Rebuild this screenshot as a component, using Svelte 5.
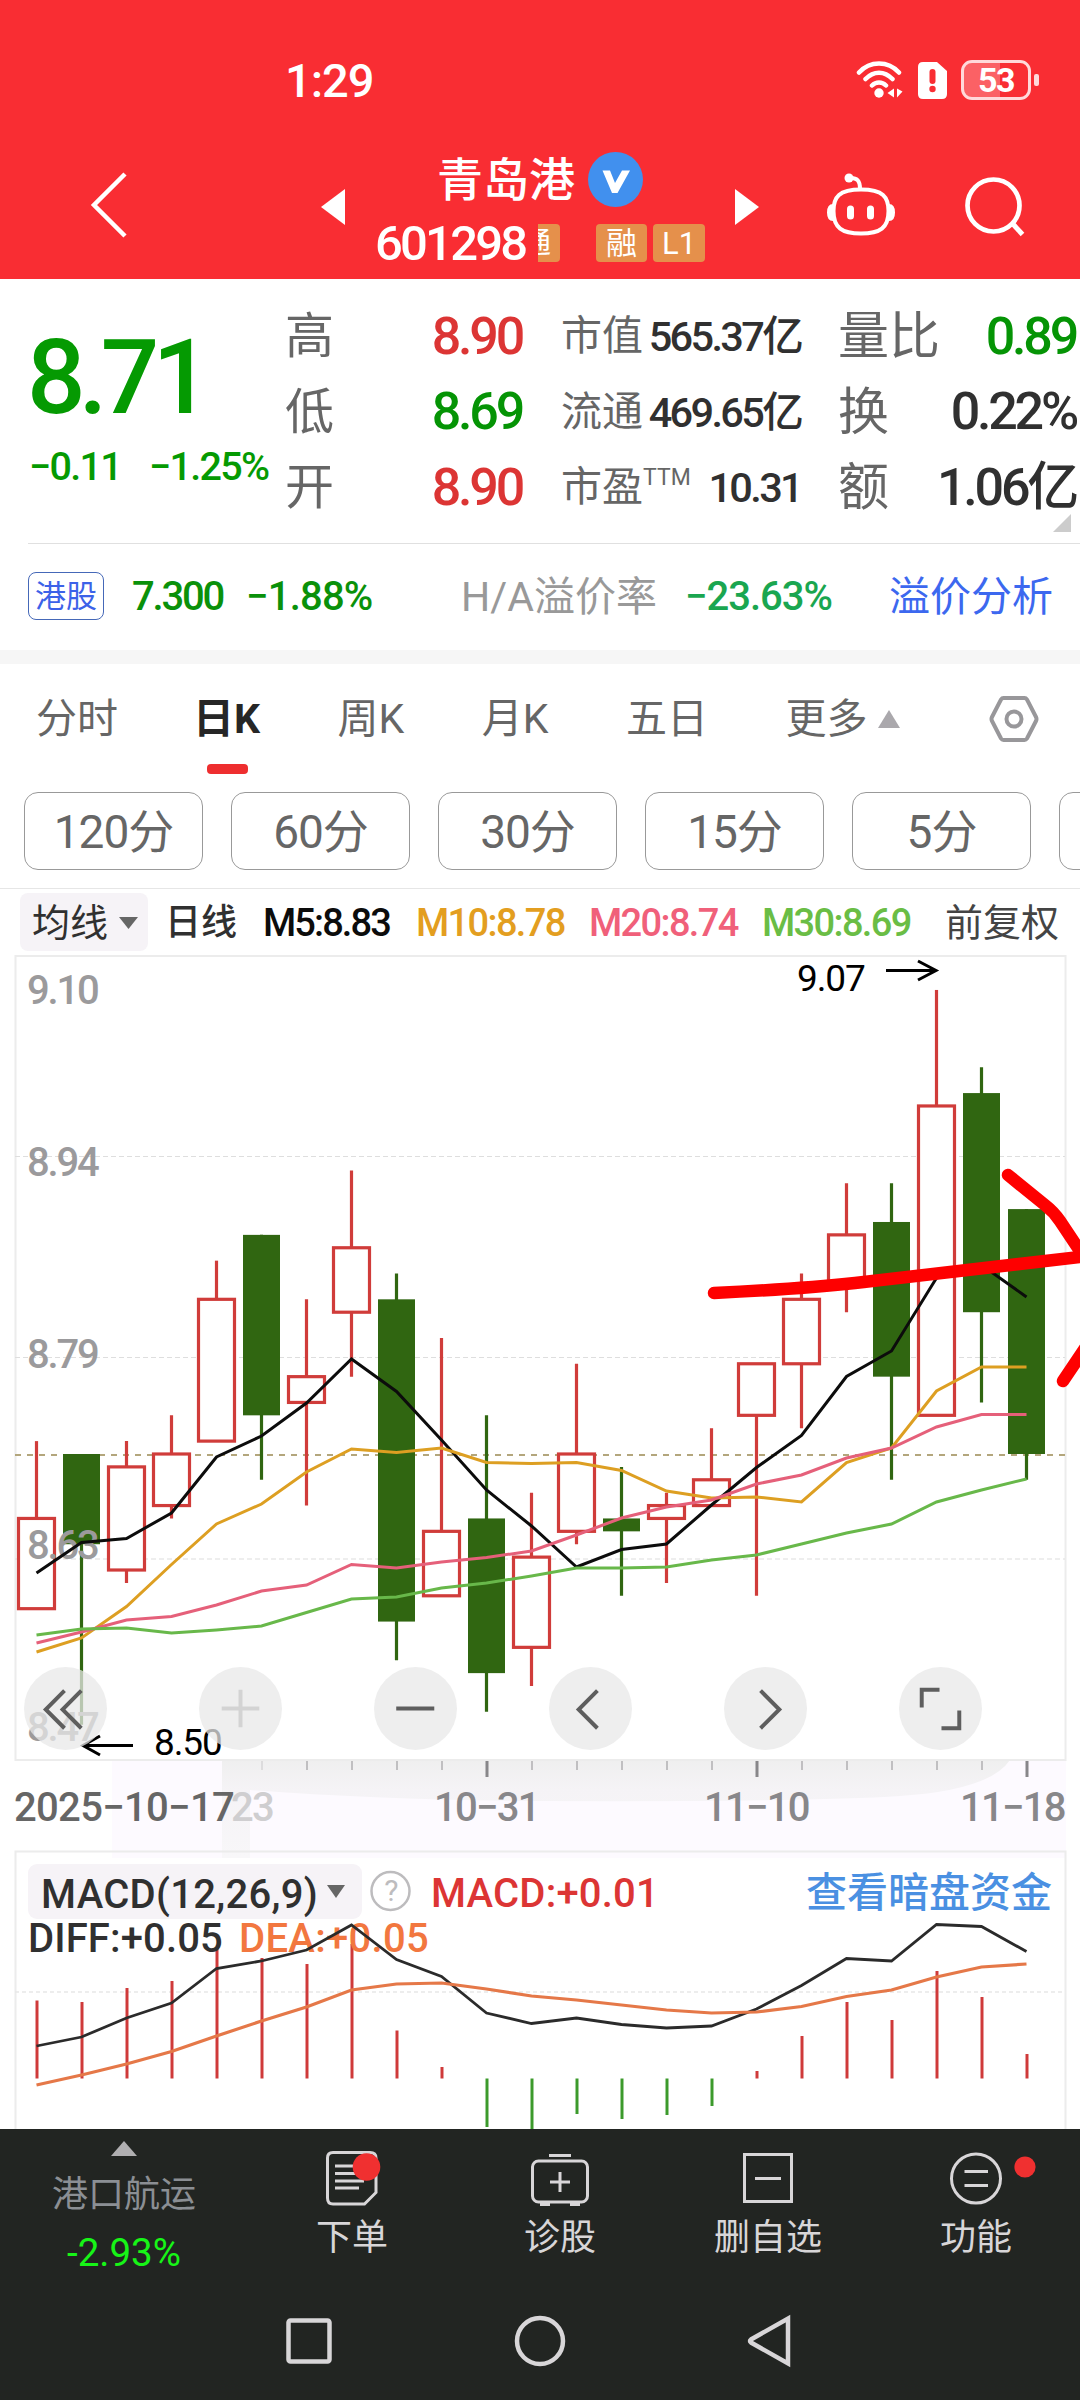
<script>
  let quotes = [
    [
      { label: "高", value: "8.90", tone: "up" },
      { label: "低", value: "8.69", tone: "down" },
      { label: "开", value: "8.90", tone: "up" },
    ],
    [
      { label: "市值", value: "565.37亿" },
      { label: "流通", value: "469.65亿" },
      { label: "市盈", sup: "TTM", value: "10.31" },
    ],
    [
      { label: "量比", value: "0.89", tone: "down" },
      { label: "换", value: "0.22%" },
      { label: "额", value: "1.06亿" },
    ],
  ];

  let tabs = ["分时", "日K", "周K", "月K", "五日"];
  let activeTab = "日K";
  let periods = ["120分", "60分", "30分", "15分", "5分", ""];

  // open, close, high, low
  let candles = [
    [8.59, 8.66, 8.72, 8.59],
    [8.71, 8.64, 8.71, 8.5],
    [8.62, 8.7, 8.72, 8.61],
    [8.67, 8.71, 8.74, 8.66],
    [8.72, 8.83, 8.86, 8.72],
    [8.88, 8.74, 8.88, 8.69],
    [8.75, 8.77, 8.83, 8.67],
    [8.82, 8.87, 8.93, 8.77],
    [8.83, 8.58, 8.85, 8.55],
    [8.6, 8.65, 8.8, 8.6],
    [8.66, 8.54, 8.74, 8.51],
    [8.56, 8.63, 8.68, 8.53],
    [8.65, 8.71, 8.78, 8.64],
    [8.66, 8.65, 8.7, 8.6],
    [8.66, 8.67, 8.68, 8.61],
    [8.67, 8.69, 8.73, 8.67],
    [8.74, 8.78, 8.78, 8.6],
    [8.78, 8.83, 8.85, 8.73],
    [8.84, 8.88, 8.92, 8.82],
    [8.89, 8.77, 8.92, 8.69],
    [8.74, 8.98, 9.07, 8.74],
    [8.99, 8.82, 9.01, 8.75],
    [8.9, 8.71, 8.9, 8.69],
  ];

  let averages = [
    { color: "#0c0c0c", ys: [1573, 1542.5, 1538.5, 1513, 1457, 1436, 1403, 1359, 1391.5, 1440, 1490, 1526, 1567, 1549.5, 1544, 1505, 1467.5, 1435.5, 1376.5, 1351, 1278, 1265, 1297] },
    { color: "#dd9f22", ys: [1652, 1638, 1606.5, 1564.5, 1524, 1504, 1472, 1449, 1452.5, 1448, 1462.5, 1463.5, 1462.5, 1470.5, 1491, 1498, 1497, 1502, 1462.5, 1448, 1391, 1367, 1367] },
    { color: "#e5607a", ys: [1643, 1632, 1620, 1616.5, 1605, 1591, 1585, 1564.5, 1568, 1562, 1557.5, 1551, 1535, 1518, 1507, 1500, 1484, 1475, 1458, 1448, 1427, 1414.5, 1414.5] },
    { color: "#68b84a", ys: [1635, 1629, 1628, 1633, 1630, 1626, 1612.5, 1599, 1597, 1588, 1583, 1576, 1568, 1568, 1567, 1560, 1555, 1544, 1533, 1524, 1502, 1490, 1479] },
  ];

  let macdBars = [2000.5, 2002, 1988, 1981, 1947, 1958, 1964, 1944, 2030.5, 2067, 2127, 2140, 2114, 2119, 2115, 2106, 2071, 2036, 2002, 2020, 1971, 1997, 2054];
  let diff = [2046, 2037, 2018, 2003, 1968.5, 1961, 1950, 1925, 1959.5, 1976.5, 2013, 2023.5, 2018, 2024.5, 2028, 2026, 2009, 1985.5, 1958.5, 1961, 1924.5, 1926.5, 1951.5];
  let dea = [2085, 2075, 2064, 2051.5, 2036, 2021, 2007, 1990, 1984, 1983, 1989, 1996, 2000, 2005, 2010, 2013, 2012, 2006.5, 1996.5, 1990, 1977, 1967, 1964];
  const zero = 2078.5;

  let grid = [
    { y: 1156.5, label: "8.94", ly: 1176 },
    { y: 1357.5, label: "8.79", ly: 1368 },
    { y: 1559, label: "8.63", ly: 1559 },
  ];

  const px = (i) => 36.5 + i * 45;
  const py = (price) => 1454 - (price - 8.71) * 1289;
  const line = (ys) => ys.map((y, i) => `${px(i)},${y}`).join(" ");
  const major = (i) => i === 10 || i === 16 || i === 22;
</script>

<div class="page">
  <header>
    <div class="status">
      <span class="clock">1:29</span>
      <svg class="wifi" width="48" height="38" viewBox="0 0 48 38" fill="none" stroke="#fff" stroke-width="4.5" stroke-linecap="round">
        <path d="M3 11.5C14-.5 32-.5 43 11.5M9.500 18C17.500 9.500 28.500 9.500 36.500 18M16 24.500C20 20.500 26 20.500 30 24.500" />
        <circle cx="23" cy="32" r="4.700" fill="#fff" stroke="none" />
        <path d="M38 27.500V36.500L31.500 32zM41 27.500V36.500L46.500 30.500z" fill="#fff" stroke="none" />
      </svg>
      <svg class="sim" width="29" height="37" viewBox="0 0 29 37">
        <path d="M5 0H19L29 9V32Q29 37 24 37H5Q0 37 0 32V5Q0 0 5 0z" fill="#fff" />
        <rect x="11.500" y="7" width="6" height="15" rx="3" fill="#f92d33" />
        <circle cx="14.500" cy="27" r="3.200" fill="#f92d33" />
      </svg>
      <div class="battery"><span>53</span></div>
      <i class="tip"></i>
    </div>
    <nav>
      <svg class="back" width="38" height="68" viewBox="0 0 38 68"><path d="M35 3L4 34L35 65" fill="none" stroke="#fff" stroke-width="4.500" /></svg>
      <svg class="prev" width="24" height="36" viewBox="0 0 24 36"><path d="M24 0V36L0 18z" fill="#fff" /></svg>
      <div class="title">
        <div class="name">
          <span>青岛港</span>
          <svg width="55" height="55" viewBox="0 0 55 55">
            <circle cx="27.500" cy="27.500" r="27.500" fill="#4190ee" />
            <path d="M14.500 18.500H22L27 31L34 18.500H42L29.500 41H24z" fill="#fff" />
          </svg>
        </div>
        <div class="code">
          <span class="num">601298</span>
          <div class="tag half"><b>通</b></div>
          <div class="tag">融</div>
          <div class="tag level">L1</div>
        </div>
      </div>
      <svg class="next" width="24" height="36" viewBox="0 0 24 36"><path d="M0 0V36L24 18z" fill="#fff" /></svg>
      <svg class="robot" width="70" height="64" viewBox="0 0 70 64" fill="none" stroke="#fff" stroke-width="4">
        <path d="M35 16.500C57 16.500 62.500 24 62.500 38C62.500 55 54 60.500 35 60.500C16 60.500 7.500 55 7.500 38C7.500 24 13 16.500 35 16.500z" />
        <path d="M23.500 5C31 4.500 34 7.500 34 16" />
        <circle cx="23" cy="5" r="4.500" fill="#fff" stroke="none" />
        <path d="M7 31Q1 31 1 39.500T7 48zM63 31Q69 31 69 39.500T63 48z" fill="#fff" stroke="none" />
        <path d="M24.500 36V43M44.500 36V43" stroke-width="7" stroke-linecap="round" />
      </svg>
      <svg class="search" width="62" height="62" viewBox="0 0 62 62" fill="none" stroke="#fff">
        <circle cx="29.500" cy="29.500" r="26" stroke-width="4.700" />
        <path d="M48 47L58.500 58.500" stroke-width="5" />
      </svg>
    </nav>
  </header>

  <section class="quote">
    <div class="last">
      <div class="price num">8.71</div>
      <div class="change num"><span>−0.11</span><span>−1.25%</span></div>
    </div>
    {#each quotes as col, c}
      <dl class="col{c}">
        {#each col as item}
          <div>
            <dt>{item.label}{#if item.sup}<sup>{item.sup}</sup>{/if}</dt>
            <dd class="num {item.tone ?? ''}">{item.value}</dd>
          </div>
        {/each}
      </dl>
    {/each}
    <i class="corner"></i>
  </section>

  <section class="premium">
    <span class="hk">港股</span>
    <span class="num hkprice">7.300</span>
    <span class="num hkchange">−1.88%</span>
    <span class="rate">H/A溢价率</span>
    <span class="num ratevalue">−23.63%</span>
    <span class="link">溢价分析</span>
  </section>

  <div class="strip"></div>

  <div class="tabs">
    {#each tabs as tab}
      <span class="tab" class:active={tab === activeTab}>{tab}</span>
    {/each}
    <span class="more">更多</span>
    <svg class="uptri" width="22" height="18" viewBox="0 0 22 18"><path d="M11 0L22 18H0z" fill="#aaa8ac" /></svg>
    <svg class="setting" width="50" height="46" viewBox="0 0 50 46" fill="none" stroke="#98979a" stroke-width="4">
      <path d="M14.500 2H35.500Q37 2 38 3.500L47 21Q48 23 47 25L38 42.500Q37 44 35.500 44H14.500Q13 44 12 42.500L3 25Q2 23 3 21L12 3.500Q13 2 14.500 2z" />
      <circle cx="25" cy="23" r="7.500" />
    </svg>
  </div>

  <div class="periods">
    {#each periods as period}
      <span>{period}</span>
    {/each}
  </div>

  <div class="legend">
    <span class="picker">均线<svg width="19" height="12" viewBox="0 0 19 12"><path d="M0 0H19L9.500 12z" fill="#666" /></svg></span>
    <span class="daily">日线</span>
    <span class="num m5">M5:8.83</span>
    <span class="num m10">M10:8.78</span>
    <span class="num m20">M20:8.74</span>
    <span class="num m30">M30:8.69</span>
    <span class="adjust">前复权</span>
  </div>

  <div class="chart">
    <svg width="1080" height="1174" viewBox="0 955 1080 1174">
      <defs>
        <linearGradient id="shade" x1="0" y1="0" x2="0" y2="1">
          <stop offset="0" stop-color="#efefef" />
          <stop offset="0.3" stop-color="#f5f3f6" />
          <stop offset="1" stop-color="#f8f7f9" />
        </linearGradient>
      </defs>
      <path d="M112 1760H1066V1858H112z" fill="#fdfaff" />
      <path d="M222 1760H1010Q990 1790 900 1796T540 1801Q380 1800 250 1790V1858H222z" fill="url(#shade)" />
      <rect x="15.500" y="956" width="1050" height="804" fill="none" stroke="#ececec" stroke-width="2" />

      {#each grid as g}
        <path d="M15 {g.y}H1065" stroke="#dedede" stroke-width="1.200" stroke-dasharray="5 3" />
      {/each}
      <path d="M15 1455H1065" stroke="#b3a67c" stroke-width="1.800" stroke-dasharray="6 6" />

      {#each candles as [open, close, high, low], i}
        {@const top = py(Math.max(open, close))}
        {@const bottom = py(Math.min(open, close))}
        {#if close > open}
          <path d="M{px(i)} {py(high)}V{top}M{px(i)} {bottom}V{py(low)}" stroke="#d03c3a" stroke-width="3.200" />
          <rect x={px(i) - 18} y={top} width="36" height={bottom - top} fill="#fff" stroke="#d03c3a" stroke-width="3.200" />
        {:else}
          <path d="M{px(i)} {py(high)}V{py(low)}" stroke="#306611" stroke-width="3.200" />
          <rect x={px(i) - 18.5} y={top} width="37" height={bottom - top} fill="#306611" />
        {/if}
      {/each}

      <g class="axis">
        <text x="27" y="1003.500">9.10</text>
        {#each grid as g}
          <text x="27" y={g.ly}>{g.label}</text>
        {/each}
        <text x="27" y="1741">8.47</text>
      </g>

      {#each averages as avg}
        <polyline points={line(avg.ys)} fill="none" stroke={avg.color} stroke-width="3" />
      {/each}

      <g class="mark">
        <text x="797" y="991">9.07</text>
        <text x="154" y="1755">8.50</text>
        <path d="M886 970.500H936M918 961L936 970.500L918 980M133 1745.500H84M100 1736L83 1745.500L100 1755" />
      </g>

      <g class="stroke">
        <path d="M714 1293Q800 1289 855 1283T1080 1257" />
        <path d="M1008 1175L1045 1205Q1054 1212 1060 1221L1090 1266" />
        <path d="M1063 1381L1092 1338" />
      </g>

      {#each candles as _, i}
        {#if i > 4}
          <path d="M{px(i) + 0.5} 1761V{major(i) ? 1777 : 1770}" stroke={major(i) ? "#88878a" : "#c0bfc1"} stroke-width={major(i) ? 3 : 2} opacity={i === 5 ? 0.4 : 1} />
        {/if}
      {/each}
      <g class="dates">
        <text class="faded" x="231" y="1821">23</text>
        <text class="start" x="14" y="1821" textLength="219">2025−10−17</text>
        <text x="434" y="1821">10−31</text>
        <text x="704" y="1821">11−10</text>
        <text x="960" y="1821">11−18</text>
      </g>

      <path d="M15.500 2129V1851.500H1065.500V2129" fill="none" stroke="#ececec" stroke-width="2" />
      <path d="M15 1992H1065" stroke="#e8e8e8" stroke-width="1.500" stroke-dasharray="4 3" />
      {#each macdBars as y, i}
        <path d="M{px(i) + 0.5} {zero}V{y}" stroke={y < zero ? "#cf3a3a" : "#3c9a2c"} stroke-width="3" />
      {/each}
      <rect x="28" y="1864" width="334" height="55" rx="9" fill="#f6f3f7" />
      <g class="macd">
        <text x="41" y="1908" textLength="275">MACD(12,26,9)</text>
        <path d="M327 1885H345L336 1898z" fill="#666" />
        <circle cx="390.500" cy="1891" r="19" fill="none" stroke="#bdbcbe" stroke-width="2.500" />
        <text class="help" x="390.500" y="1901" text-anchor="middle">?</text>
        <text class="red" x="431" y="1907" textLength="226">MACD:+0.01</text>
        <text x="28" y="1952" textLength="193">DIFF:+0.05</text>
        <text class="orange" x="239" y="1952" textLength="188">DEA:+0.05</text>
        <text class="blue" x="806" y="1907">查看暗盘资金</text>
      </g>
      <polyline points={line(diff)} fill="none" stroke="#2b2b2b" stroke-width="2.800" />
      <polyline points={line(dea)} fill="none" stroke="#e57848" stroke-width="3.200" />
    </svg>

    <div class="controls">
      <button aria-label="first"><svg viewBox="0 0 84 84"><path d="M41 24L22 43L41 62M58 24L39 43L58 62" /></svg></button>
      <button aria-label="zoom in" class="off"><svg viewBox="0 0 84 84"><path d="M42 23V61M23 42H61" /></svg></button>
      <button aria-label="zoom out"><svg viewBox="0 0 84 84"><path d="M22.500 42H61" /></svg></button>
      <button aria-label="left"><svg viewBox="0 0 84 84"><path d="M49 24L30 43L49 62" /></svg></button>
      <button aria-label="right"><svg viewBox="0 0 84 84"><path d="M37 24L56 43L37 62" /></svg></button>
      <button aria-label="full screen"><svg viewBox="0 0 84 84"><path d="M23 41V23H41M61 44V62H43" /></svg></button>
    </div>
  </div>

  <footer>
    <div class="actions">
      <div class="sector">
        <svg width="26" height="15" viewBox="0 0 26 15"><path d="M13 0L26 15H0z" fill="#b0afb1" /></svg>
        <span>港口航运</span>
        <b>-2.93%</b>
      </div>
      <div class="action">
        <svg width="60" height="60" viewBox="0 0 60 60">
          <path d="M11 5.500H48Q54 5.500 54 11V45.500L42.500 57H11Q5.500 57 5.500 51V11Q5.500 5.500 11 5.500z" />
          <path d="M13 19H33M13 26.500H36M13 34H42M13 41H37" />
          <circle class="dot" cx="44.500" cy="20" r="13.800" />
        </svg>
        <span>下单</span>
      </div>
      <div class="action">
        <svg width="60" height="60" viewBox="0 0 60 60">
          <rect x="2.500" y="14" width="55" height="41" rx="6" />
          <path d="M19 8.500H41M30 25V45M20 35H40M10 57.500H20M40 57.500H50" />
        </svg>
        <span>诊股</span>
      </div>
      <div class="action">
        <svg width="60" height="60" viewBox="0 0 60 60">
          <path d="M6.500 7.500H53.500V54.500H6.500zM17 31.500H43" />
        </svg>
        <span>删自选</span>
      </div>
      <div class="action">
        <svg width="60" height="60" viewBox="0 0 60 60">
          <circle cx="30" cy="31.500" r="24.500" />
          <path d="M18.500 24.500H42M18.500 38.500H42" />
          <circle class="dot" cx="79" cy="20" r="10.600" />
        </svg>
        <span>功能</span>
      </div>
    </div>
    <div class="system">
      <svg width="46" height="46" viewBox="0 0 46 46"><rect x="2.500" y="2.500" width="41" height="41" rx="2" /></svg>
      <svg width="52" height="52" viewBox="0 0 52 52"><circle cx="26" cy="26" r="23" /></svg>
      <svg width="46" height="52" viewBox="0 0 46 52"><path d="M41 3.500V48.500L4 27.500Q2 26 4 24.500z" /></svg>
    </div>
  </footer>
</div>

<style>
  :global(body) {
    margin: 0;
    background: #fff;
  }

  .page {
    width: 1080px;
    height: 2400px;
    overflow: hidden;
    font-family: Roboto, "Noto Sans CJK SC", sans-serif;
    line-height: 1;
    color: #303030;
    background: #fff;
  }

  span, dt, dd {
    white-space: nowrap;
  }

  svg {
    display: block;
    flex: none;
  }

  .num {
    font-weight: 500;
    letter-spacing: -0.043em;
  }

  .up {
    color: #dc3534;
  }

  .down {
    color: #059405;
  }

  header {
    height: 279px;
    background: #f92d33;
    color: #fff;
  }

  .status {
    display: flex;
    align-items: center;
    height: 140px;
    padding: 10px 0 0 285px;
  }

  .clock {
    width: 571px;
    font-size: 47px;
    font-weight: 500;
    letter-spacing: -1px;
  }

  .sim {
    margin-left: 14px;
  }

  .battery {
    box-sizing: border-box;
    display: flex;
    align-items: center;
    justify-content: center;
    width: 70px;
    height: 40px;
    margin-left: 14px;
    border: 3px solid #ffd9da;
    border-radius: 11px;
    background: linear-gradient(90deg, #fb6165 57%, transparent 57%);
    font-size: 34px;
    font-weight: 700;
    letter-spacing: -1.5px;
  }

  .tip {
    width: 5px;
    height: 12px;
    margin-left: 3px;
    border-radius: 2px;
    background: #ffd9da;
  }

  nav {
    display: flex;
    align-items: center;
    height: 110px;
    padding: 0 0 18px 90px;
  }

  .prev {
    margin: 4px 0 0 193px;
  }

  .next {
    margin-top: 4px;
  }

  .title {
    align-self: flex-start;
    width: 390px;
  }

  .name {
    display: flex;
    align-items: center;
    height: 58px;
    padding-left: 92px;
    font-size: 46px;
    font-weight: 500;
  }

  .name span {
    padding-top: 2px;
  }

  .name svg {
    margin-left: 13px;
  }

  .code {
    display: flex;
    align-items: center;
    height: 40px;
    margin-top: 15px;
    padding-left: 30px;
  }

  .code .num {
    width: 163px;
    font-size: 49px;
    letter-spacing: -2.8px;
  }

  .tag {
    box-sizing: border-box;
    width: 51px;
    height: 38px;
    border-radius: 4px;
    background: #e5904b;
    font-size: 31px;
    line-height: 39px;
    text-align: center;
  }

  .half {
    display: flex;
    justify-content: flex-end;
    width: 22px;
    margin-right: 36px;
    padding-right: 9px;
    overflow: hidden;
    border-radius: 0 4px 4px 0;
  }

  .half b {
    font-size: 29px;
    font-weight: 400;
  }

  .level {
    width: 52px;
    margin-left: 6px;
  }

  .robot {
    margin-left: 67px;
  }

  .search {
    margin: 4px 0 0 68px;
  }

  .quote {
    position: relative;
    display: flex;
    height: 264px;
  }

  .last {
    width: 286px;
    padding-top: 47px;
    color: #059a02;
  }

  .price {
    padding-left: 27px;
    font-size: 103px;
    height: 103px;
    letter-spacing: -0.065em;
  }

  .change {
    display: flex;
    height: 40px;
    padding: 18px 0 0 29px;
    font-size: 39.500px;
  }

  .change span + span {
    margin-left: 28px;
  }

  dl {
    margin: 0;
    padding-top: 20px;
  }

  dl div {
    display: flex;
    align-items: center;
    justify-content: space-between;
    height: 75.500px;
  }

  dt {
    color: #666;
  }

  dd {
    margin: 0;
  }

  .col0 {
    width: 236px;
    font-size: 49px;
  }

  .col0 dd, .col2 dd {
    font-size: 52px;
    letter-spacing: -0.062em;
  }

  .col1 {
    width: 240px;
    margin-left: 39px;
    font-size: 41px;
  }

  .col1 dd {
    font-size: 41.500px;
    letter-spacing: -0.064em;
  }

  .col2 {
    width: 238px;
    margin-left: 37px;
    font-size: 51px;
  }

  .col0 dt {
    margin-left: -1px;
  }

  sup {
    font-size: 23px;
    line-height: 0;
    vertical-align: 16px;
  }

  .corner {
    position: absolute;
    right: 9px;
    bottom: 11px;
    border-left: 18px solid transparent;
    border-bottom: 18px solid #ccc;
  }

  .premium {
    display: flex;
    align-items: center;
    height: 106px;
    margin-left: 28px;
    border-top: 1px solid #e0e0e0;
    font-size: 41px;
  }

  .hk {
    box-sizing: border-box;
    width: 76px;
    height: 48px;
    margin-bottom: 3px;
    border: 1.500px solid #4568b8;
    border-radius: 8px;
    color: #3c62e8;
    font-size: 31px;
    line-height: 47px;
    text-align: center;
  }

  .hkprice, .hkchange {
    color: #0a910a;
    font-size: 40px;
  }

  .hkprice {
    width: 114px;
    margin-left: 28px;
    letter-spacing: -0.055em;
  }

  .hkchange {
    width: 215px;
    letter-spacing: -0.02em;
  }

  .rate {
    width: 224px;
    color: #999;
  }

  .ratevalue {
    width: 204px;
    color: #1aa650;
    font-size: 40px;
    letter-spacing: -0.025em;
  }

  .link {
    color: #3c68ef;
  }

  .strip {
    height: 14px;
    background: #f6f6f6;
  }

  .tabs {
    display: flex;
    align-items: center;
    height: 110px;
    padding-left: 36px;
    color: #666;
    font-size: 41px;
  }

  .tab {
    position: relative;
    margin-right: 77.500px;
  }

  .tab:first-child {
    margin-right: 75px;
  }

  .active {
    color: #262626;
    font-weight: 700;
  }

  .active::after {
    content: "";
    position: absolute;
    left: 14px;
    top: 65px;
    width: 41px;
    height: 10px;
    border-radius: 4px;
    background: #ee2e2f;
  }

  .uptri {
    margin-left: 10px;
  }

  .setting {
    margin-left: auto;
    margin-right: 41px;
  }

  .periods {
    display: flex;
    gap: 28px;
    height: 96px;
    padding: 18px 0 0 24px;
    border-bottom: 1px solid #e6e6e6;
    overflow: hidden;
  }

  .periods span {
    box-sizing: border-box;
    flex: none;
    width: 179px;
    height: 78px;
    border: 1px solid #999;
    border-radius: 14px;
    color: #666;
    font-size: 46px;
    letter-spacing: -1px;
    line-height: 78px;
    text-align: center;
  }

  .legend {
    display: flex;
    align-items: center;
    height: 66px;
    padding-left: 20px;
    font-size: 38px;
  }

  .legend > span {
    padding-top: 2px;
  }

  .legend .picker {
    display: flex;
    align-items: center;
    gap: 11px;
    box-sizing: border-box;
    width: 128px;
    height: 58px;
    padding-left: 12px;
    border-radius: 8px;
    background: #f6f3f7;
  }

  .daily {
    width: 98px;
    margin-left: 17px;
    font-size: 36px;
    font-weight: 500;
  }

  .m5 {
    width: 153px;
    color: #0c0c0c;
    letter-spacing: -0.05em;
  }

  .m10, .m20, .m30 {
    width: 173px;
  }

  .m10 {
    color: #e39e20;
  }

  .m20 {
    color: #f0607a;
  }

  .m30 {
    width: 183px;
    color: #6abd45;
  }

  .adjust {
    color: #444;
  }

  .chart {
    position: relative;
    height: 1174px;
  }

  .axis, .dates, .macd {
    font-size: 40px;
    font-weight: 500;
    letter-spacing: -0.043em;
  }

  .axis {
    fill: #9b9a9c;
    letter-spacing: -0.055em;
  }

  .dates {
    fill: #88878a;
  }

  .dates .start {
    fill: #666;
  }

  .dates .faded {
    fill: #cfced0;
  }

  .mark {
    font-size: 37px;
    letter-spacing: -0.03em;
  }

  .mark path {
    fill: none;
    stroke: #000;
    stroke-width: 3;
  }

  .stroke {
    fill: none;
    stroke: #fe0000;
    stroke-width: 12.500;
    stroke-linecap: round;
  }

  .macd {
    fill: #303030;
  }

  .macd .help {
    fill: #bdbcbe;
    font-size: 30px;
    font-weight: 400;
  }

  .macd .red {
    fill: #dc3534;
  }

  .macd .orange {
    fill: #f2773f;
  }

  .macd .blue {
    fill: #4a90e2;
    font-size: 41px;
    letter-spacing: 0;
  }

  .controls {
    position: absolute;
    top: 712px;
    left: 24px;
    display: flex;
    gap: 92px;
  }

  button {
    width: 83px;
    height: 83px;
    padding: 0;
    border: 0;
    border-radius: 50%;
    background: rgba(232, 232, 232, 0.74);
  }

  button path {
    fill: none;
    stroke: #5e5e5e;
    stroke-width: 4;
  }

  .off path {
    stroke: #d3d3d3;
  }

  footer {
    position: relative;
    height: 271px;
    background: #222522;
  }

  .actions {
    display: flex;
    height: 166px;
  }

  .sector {
    display: flex;
    flex-direction: column;
    align-items: center;
    width: 248px;
    padding-top: 12px;
    color: #8b8f94;
    font-size: 36px;
  }

  .sector span {
    margin-top: 21px;
  }

  .sector b {
    margin-top: 21px;
    color: #17f517;
    font-size: 38.500px;
    font-weight: 400;
  }

  .action {
    display: flex;
    flex-direction: column;
    align-items: center;
    width: 208px;
    padding-top: 18px;
    color: #d8d6d8;
    font-size: 36px;
  }

  .action span {
    margin-top: 13px;
  }

  .action svg, .system svg {
    overflow: visible;
    fill: none;
    stroke: #d8d6d8;
    stroke-width: 3;
  }

  .action .dot {
    fill: #f03030;
    stroke: none;
  }

  .system {
    display: flex;
    align-items: center;
    height: 92px;
    padding-left: 286px;
  }

  .system svg {
    stroke-width: 4.500;
    margin-right: 182px;
  }

  .system svg:nth-child(2) {
    margin-right: 181px;
  }
</style>
